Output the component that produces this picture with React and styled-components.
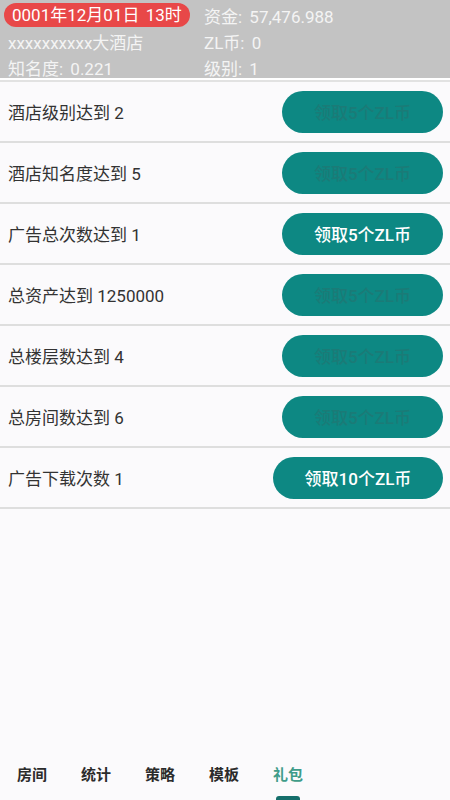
import React from "react";
import styled, { createGlobalStyle } from "styled-components";

const Global = createGlobalStyle`
    body {
        margin: 0;
        background: #fbfafc;
        font-family: Roboto, "Noto Sans CJK SC", sans-serif;
    }
`;

const Page = styled.div`
    display: flex;
    flex-direction: column;
    min-height: 100vh;
`;

const Header = styled.header`
    display: grid;
    grid-template-columns: 196px 1fr;
    grid-template-rows: 26px 27px 24px;
    align-items: center;
    height: 80px;
    padding: 2px 4px 0;
    box-sizing: border-box;
    background: #c3c3c3;
    border-bottom: 2px solid #ffffff;
    box-shadow: 0 2px 0 #e2e2e2;
    margin-bottom: 2px;
    color: #f4f4f4;
    font-size: 17px;
    word-spacing: 3px;
`;

const Cell = styled.div`
    padding-left: 4px;
    white-space: nowrap;
`;

const Pill = styled.span`
    display: inline-block;
    margin-left: -4px;
    padding: 0 8px;
    height: 24px;
    line-height: 24px;
    box-sizing: border-box;
    border-radius: 12px;
    background: #e84848;
    color: #ffffff;
    word-spacing: 2px;
`;

const List = styled.div`
    flex: 1;
`;

const Row = styled.div`
    display: flex;
    align-items: center;
    justify-content: space-between;
    height: 59px;
    padding: 0 7px 0 8px;
    border-bottom: 2px solid #dedede;
`;

const Label = styled.span`
    font-size: 17px;
    color: #333333;
`;

const Claim = styled.button`
    width: ${(p) => (p.$wide ? "170px" : "161px")};
    height: 42px;
    border: none;
    border-radius: 21px;
    background: #0d8883;
    color: ${(p) => (p.$disabled ? "#1b7b77" : "#ffffff")};
    font-family: inherit;
    font-size: 17px;
    font-weight: 500;
    cursor: pointer;
`;

const Tabs = styled.nav`
    display: flex;
    height: 48px;
`;

const Tab = styled.div`
    position: relative;
    width: 64px;
    height: 100%;
    display: flex;
    justify-content: center;
    padding-top: 11px;
    box-sizing: border-box;
    font-size: 15px;
    font-weight: bold;
    color: ${(p) => (p.$active ? "#3f9c89" : "#2b2b2b")};
`;

const Indicator = styled.span`
    position: absolute;
    bottom: 0;
    left: 20px;
    width: 24px;
    height: 4px;
    border-radius: 3px 3px 0 0;
    background: #156e6b;
`;

const tasks = [
    { label: "酒店级别达到 2", reward: "领取5个ZL币", disabled: true },
    { label: "酒店知名度达到 5", reward: "领取5个ZL币", disabled: true },
    { label: "广告总次数达到 1", reward: "领取5个ZL币" },
    { label: "总资产达到 1250000", reward: "领取5个ZL币", disabled: true },
    { label: "总楼层数达到 4", reward: "领取5个ZL币", disabled: true },
    { label: "总房间数达到 6", reward: "领取5个ZL币", disabled: true },
    { label: "广告下载次数 1", reward: "领取10个ZL币", wide: true },
];

const tabs = ["房间", "统计", "策略", "模板", "礼包"];

const App = () => {
    return (
        <Page>
            <Global />
            <Header>
                <Cell>
                    <Pill>0001年12月01日 13时</Pill>
                </Cell>
                <Cell>资金: 57,476.988</Cell>
                <Cell>xxxxxxxxxx大酒店</Cell>
                <Cell>ZL币: 0</Cell>
                <Cell>知名度: 0.221</Cell>
                <Cell>级别: 1</Cell>
            </Header>
            <List>
                {tasks.map((t) => (
                    <Row key={t.label}>
                        <Label>{t.label}</Label>
                        <Claim $disabled={t.disabled} $wide={t.wide}>
                            {t.reward}
                        </Claim>
                    </Row>
                ))}
            </List>
            <Tabs>
                {tabs.map((name, i) => (
                    <Tab key={name} $active={i === 4}>
                        {name}
                        {i === 4 && <Indicator />}
                    </Tab>
                ))}
            </Tabs>
        </Page>
    );
};

export default App;
